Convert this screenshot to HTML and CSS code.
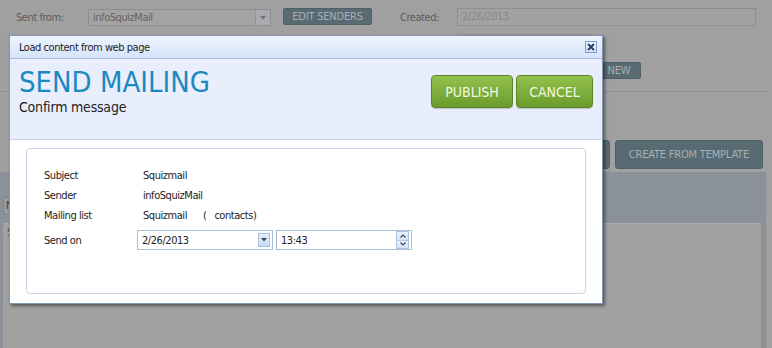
FILE: index.html
```html
<!DOCTYPE html>
<html lang="en">
<head>
    <meta charset="UTF-8">
    <title>Send mailing</title>
    <link rel="stylesheet" href="styles.css">
</head>
<body>
<div class="page">
    <div class="form">
        <div class="form-col">
            <div class="field">
                <label class="field-label">Sent from:</label>
                <div class="select">
                    <span class="select-text">infoSquizMail</span>
                    <span class="select-btn"><svg width="6" height="4" viewBox="0 0 6 4"><path d="M0 0 H6 L3 3.5 Z" fill="#6f6f6f"/></svg></span>
                </div>
                <button class="btn-dark btn-senders">EDIT SENDERS</button>
            </div>
            <div class="field field-second">
                <span class="field-label"></span>
                <div class="select">
                    <span class="select-text"></span>
                    <span class="select-btn"><svg width="6" height="4" viewBox="0 0 6 4"><path d="M0 0 H6 L3 3.5 Z" fill="#6f6f6f"/></svg></span>
                </div>
            </div>
        </div>
        <div class="form-col">
            <div class="field">
                <label class="field-label field-label-short">Created:</label>
                <div class="input input-wide">2/26/2013</div>
            </div>
            <div class="field field-second">
                <span class="field-label field-label-short"></span>
                <div class="select select-short">
                    <span class="select-text"></span>
                    <span class="select-btn"><svg width="6" height="4" viewBox="0 0 6 4"><path d="M0 0 H6 L3 3.5 Z" fill="#6f6f6f"/></svg></span>
                </div>
            </div>
            <div class="field field-third">
                <span class="field-label field-label-short"></span>
                <button class="btn-dark btn-new">NEW</button>
            </div>
        </div>
    </div>
    <div class="divider"></div>
    <div class="actions">
        <button class="btn-dark btn-action">CREATE NEW</button>
        <button class="btn-dark btn-action">CREATE FROM TEMPLATE</button>
    </div>
    <div class="grid-panel">
        <div class="grid-head">
            <div class="grid-col">N</div>
        </div>
        <div class="grid-body">
            <div class="grid-row">S</div>
        </div>
    </div>
</div>

<div class="modal">
    <div class="modal-title">
        <span>Load content from web page</span>
        <span class="modal-close">
            <svg width="8" height="8" viewBox="0 0 8 8"><path d="M1 1 L7 7 M7 1 L1 7" stroke="#1d3b6e" stroke-width="1.8"/></svg>
        </span>
    </div>
    <div class="modal-head">
        <div>
            <h1 class="modal-heading">SEND MAILING</h1>
            <div class="modal-sub">Confirm message</div>
        </div>
        <div class="modal-buttons">
            <button class="btn-green btn-publish">PUBLISH</button>
            <button class="btn-green btn-cancel">CANCEL</button>
        </div>
    </div>
    <div class="modal-body">
        <div class="summary">
            <div class="summary-row">
                <span class="summary-label">Subject</span>
                <span class="summary-value">Squizmail</span>
            </div>
            <div class="summary-row">
                <span class="summary-label">Sender</span>
                <span class="summary-value">infoSquizMail</span>
            </div>
            <div class="summary-row">
                <span class="summary-label">Mailing list</span>
                <span class="summary-value list-value">Squizmail<span class="paren">(</span><span class="contacts">contacts)</span></span>
            </div>
            <div class="summary-row summary-send">
                <span class="summary-label">Send on</span>
                <div class="date-input">
                    <span>2/26/2013</span>
                    <span class="drop-btn">
                        <svg width="6" height="4" viewBox="0 0 6 4"><path d="M0 0 H6 L3 3.5 Z" fill="#34465e"/></svg>
                    </span>
                </div>
                <div class="date-input time-input">
                    <span>13:43</span>
                    <span class="spin">
                        <span class="spin-btn"><svg width="6" height="4" viewBox="0 0 6 4"><path d="M0.5 3.5 L3 1 L5.5 3.5" fill="none" stroke="#3a4c66" stroke-width="1.2"/></svg></span>
                        <span class="spin-btn"><svg width="6" height="4" viewBox="0 0 6 4"><path d="M0.5 0.5 L3 3 L5.5 0.5" fill="none" stroke="#3a4c66" stroke-width="1.2"/></svg></span>
                    </span>
                </div>
            </div>
        </div>
    </div>
</div>
</body>
</html>
```

FILE: styles.css
```css
body {
    margin: 0;
    background: #a0a0a0;
    font-family: Tahoma, "DejaVu Sans Condensed", "DejaVu Sans", sans-serif;
    font-size: 11px;
    letter-spacing: -0.45px;
    color: #222;
    height: 348px;
    overflow: hidden;
}

button {
    font-family: inherit;
    cursor: pointer;
}

/* page behind the dialog */

.page {
    padding-top: 8px;
}

.form {
    display: grid;
    grid-template-columns: 384px 1fr;
    padding-left: 16px;
}

.field {
    display: flex;
    align-items: flex-start;
}

.field-second {
    margin-top: 6px;
}

.field-third {
    margin-top: 11px;
}

.field-label {
    width: 72px;
    color: #5c5c5c;
    line-height: 20px;
}

.field-label-short {
    width: 57px;
}

.select {
    display: flex;
    justify-content: space-between;
    width: 183px;
    height: 17px;
    margin-top: 1px;
    box-sizing: border-box;
    border: 1px solid #8e8e8e;
    background: #a3a3a3;
}

.select-short {
    width: 136px;
    margin-top: 0;
    margin-left: 1px;
}

.select-text {
    padding-left: 4px;
    line-height: 15px;
    color: #636363;
}

.select-btn {
    width: 14px;
    display: flex;
    align-items: center;
    justify-content: center;
    border-left: 1px solid #939393;
    background: #a9aaad;
}

.input {
    height: 18px;
    box-sizing: border-box;
    border: 1px solid #8e8e8e;
    background: #a2a2a2;
    color: #8a8a8a;
    padding-left: 4px;
    line-height: 16px;
}

.input-wide {
    width: 299px;
}

.btn-dark {
    border: 1px solid #4f6168;
    border-radius: 2px;
    background: #586b72;
    color: #a7b0b3;
    font-size: 11px;
    letter-spacing: -0.2px;
    padding: 0;
}

.btn-senders {
    width: 89px;
    height: 17px;
    margin-left: 12px;
}

.btn-new {
    width: 44px;
    height: 17px;
    margin-left: 140px;
}

.divider {
    height: 1px;
    margin: 12px 5px 0 0;
    background: #8f8f8f;
}

.actions {
    display: flex;
    justify-content: flex-end;
    gap: 5px;
    margin-top: 48px;
    padding-right: 9px;
}

.btn-action {
    height: 29px;
    padding: 0 13px;
    border-radius: 3px;
}

.grid-panel {
    margin: 3px 6px 0 0;
    height: 178px;
    display: flex;
    flex-direction: column;
    background: #8a9199;
    padding: 0 5px 0 3px;
}

.grid-head {
    height: 51px;
    padding-top: 25px;
    box-sizing: border-box;
}

.grid-col {
    width: 20px;
    height: 18px;
    box-sizing: border-box;
    border: 1px solid #80868e;
    background: #989a9e;
    color: #3e3e3e;
    padding-left: 2px;
    line-height: 16px;
}

.grid-body {
    flex: 1;
    background: #a1a1a1;
    border-top: 1px solid #a9adb3;
}

.grid-row {
    padding: 2px 4px;
    color: #4a4a4a;
}

/* dialog */

.modal {
    position: absolute;
    left: 9px;
    top: 35px;
    width: 592px;
    height: 267px;
    border: 1px solid #8295b6;
    background: #fff;
    box-shadow: 2px 2px 3px rgba(0, 0, 0, 0.45);
    display: flex;
    flex-direction: column;
}

.modal-title {
    height: 22px;
    display: flex;
    align-items: center;
    justify-content: space-between;
    padding: 0 5px 0 9px;
    background: linear-gradient(#edf4fe, #d6e4f8);
    border-bottom: 1px solid #a7bedf;
    color: #1e1e1e;
}

.modal-close {
    width: 12px;
    height: 12px;
    box-sizing: border-box;
    border: 1px solid #7f9cc9;
    background: linear-gradient(#f4f8fe, #d3e1f5);
    display: flex;
    align-items: center;
    justify-content: center;
    margin-top: -1px;
}

.modal-head {
    height: 80px;
    display: flex;
    justify-content: space-between;
    align-items: flex-start;
    padding: 0 9px;
    background: #e8eefc;
    border-bottom: 1px solid #c8d4ea;
}

.modal-heading {
    margin: 9px 0 0;
    font-size: 29px;
    font-weight: normal;
    letter-spacing: 0;
    line-height: 29px;
    color: #1c88c1;
}

.modal-sub {
    margin-top: 2px;
    font-size: 14px;
    letter-spacing: -0.2px;
    line-height: 16px;
    color: #222;
}

.modal-buttons {
    display: flex;
    gap: 3px;
    margin-top: 16px;
}

.btn-green {
    height: 33px;
    padding: 0;
    border: 1px solid #5b8627;
    border-radius: 4px;
    background: linear-gradient(#93c14d, #6a9b2b);
    color: #f1f8e4;
    font-size: 14px;
    letter-spacing: 0;
    box-shadow: 0 1px 1px rgba(0, 0, 0, 0.2);
}

.btn-publish {
    width: 82px;
}

.btn-cancel {
    width: 77px;
}

.modal-body {
    flex: 1;
    display: flex;
    padding: 8px 16px 9px;
}

.summary {
    flex: 1;
    border: 1px solid #c6d5ea;
    border-radius: 4px;
    padding: 16px 17px 0;
}

.summary-row {
    display: flex;
    align-items: center;
    height: 20px;
}

.summary-label {
    width: 93px;
    color: #222;
}

.summary-value {
    padding-left: 6px;
    color: #222;
}

.paren {
    margin-left: 16px;
}

.contacts {
    margin-left: 8px;
}

.summary-send {
    margin-top: 5px;
}

.date-input {
    width: 136px;
    height: 20px;
    box-sizing: border-box;
    border: 1px solid #a8bedb;
    display: flex;
    align-items: center;
    justify-content: space-between;
    padding: 0 2px 0 4px;
}

.time-input {
    margin-left: 3px;
}

.drop-btn {
    width: 12px;
    height: 14px;
    box-sizing: border-box;
    border: 1px solid #aac0de;
    background: linear-gradient(#e6eefa, #c8daf2);
    display: flex;
    align-items: center;
    justify-content: center;
}

.spin {
    display: flex;
    flex-direction: column;
    width: 13px;
    height: 18px;
    box-sizing: border-box;
    border: 1px solid #aac0de;
}

.spin-btn {
    flex: 1;
    display: flex;
    align-items: center;
    justify-content: center;
    background: linear-gradient(#edf3fc, #d4e2f5);
}

.spin-btn + .spin-btn {
    border-top: 1px solid #b7cae4;
}
```
